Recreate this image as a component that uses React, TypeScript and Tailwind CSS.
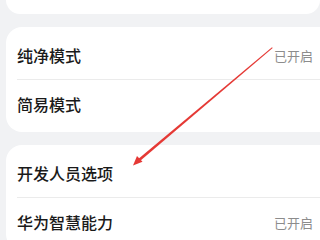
import React from "react";

const font = { fontFamily: '"Noto Sans CJK SC", "Noto Sans", sans-serif' };

function Row({ label, status }: { label: string; status?: string }) {
  return (
    <div className="flex h-[48px] items-center justify-between pr-[27px]">
      <span className="text-[16px] font-medium leading-none text-[#1a1a1a]">{label}</span>
      {status && <span className="text-[13px] leading-none text-[#8c8c8c]">{status}</span>}
    </div>
  );
}

export default function App() {
  return (
    <div className="relative h-[240px] w-[320px] overflow-hidden bg-[#f1f2f4]" style={font}>
      <div className="flex flex-col gap-[13px] pl-[6px]">
        <div className="h-[14px] rounded-b-[16px] bg-white" />
        <div className="-mr-[20px] rounded-[16px] bg-white py-[4px] pl-[11px]">
          <Row label="纯净模式" status="已开启" />
          <div className="h-px bg-[#ebebeb]" />
          <Row label="简易模式" />
        </div>
        <div className="-mr-[20px] rounded-[16px] bg-white py-[4px] pl-[11px]">
          <Row label="开发人员选项" />
          <div className="h-px bg-[#ebebeb]" />
          <Row label="华为智慧能力" status="已开启" />
        </div>
      </div>
      <svg className="absolute left-0 top-0" width="320" height="240" viewBox="0 0 320 240">
        <polygon points="272,47.2 272.7,48 140.3,160.8 138.5,158.8" fill="#e53935" />
        <polygon points="133,165.5 137,156 142.5,161.8" fill="#e53935" />
      </svg>
    </div>
  );
}
